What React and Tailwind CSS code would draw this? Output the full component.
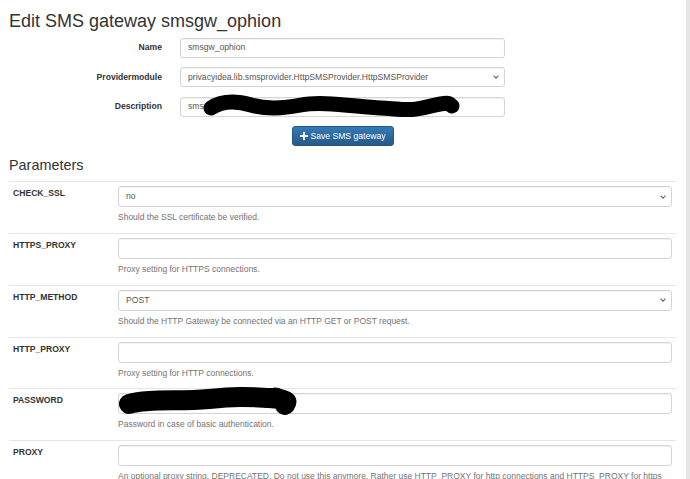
import React from 'react';

const params = [
  { name: 'CHECK_SSL', type: 'select', value: 'no', help: 'Should the SSL certificate be verified.' },
  { name: 'HTTPS_PROXY', type: 'text', value: '', help: 'Proxy setting for HTTPS connections.' },
  { name: 'HTTP_METHOD', type: 'select', value: 'POST', help: 'Should the HTTP Gateway be connected via an HTTP GET or POST request.' },
  { name: 'HTTP_PROXY', type: 'text', value: '', help: 'Proxy setting for HTTP connections.' },
  { name: 'PASSWORD', type: 'text', value: '', help: 'Password in case of basic authentication.', redacted: true },
  {
    name: 'PROXY',
    type: 'text',
    value: '',
    help: 'An optional proxy string. DEPRECATED. Do not use this anymore. Rather use HTTP_PROXY for http connections and HTTPS_PROXY for https connections.',
  },
];

const Chevron = () => (
  <svg className="absolute right-[5px] top-1/2 -translate-y-1/2" width="6" height="4" viewBox="0 0 6 4" fill="none">
    <path d="M0.6 0.6 L3 3.2 L5.4 0.6" stroke="#666" strokeWidth="1.1" />
  </svg>
);

const Field = ({ value, select, className = 'h-[21px]', children }) => (
  <div
    className={
      'relative flex items-center rounded-[3px] border border-[#d4d4d4] bg-white pl-[7px] text-[8.6px] text-[#555] shadow-[inset_0_1px_1px_rgba(0,0,0,0.06)] ' +
      className
    }
  >
    <span>{value}</span>
    {select && <Chevron />}
    {children}
  </div>
);

const DescScribble = () => (
  <svg className="absolute left-0 top-0 overflow-visible" width="1" height="1">
    <path
      d="M30 10 C 42 2, 56 3, 70 7 S 100 11, 120 7 S 170 8, 200 10 S 230 13, 250 8 S 268 6, 271 8"
      stroke="#000"
      strokeWidth="15"
      strokeLinecap="round"
      fill="none"
    />
  </svg>
);

const PassScribble = () => (
  <svg className="absolute left-0 top-0 overflow-visible" width="1" height="1">
    <path
      d="M10 10 C 30 4, 60 8, 90 5 S 130 3, 150 4 S 168 8, 166 11"
      stroke="#000"
      strokeWidth="20"
      strokeLinecap="round"
      fill="none"
    />
    <path d="M150 0 C 156 -4, 162 -2, 164 4" stroke="#000" strokeWidth="9" strokeLinecap="round" fill="none" />
  </svg>
);

const TopRow = ({ label, children }) => (
  <div className="flex items-center">
    <div className="w-[153px] text-right text-[8.6px] font-bold text-[#333]">{label}</div>
    <div className="ml-[18px] w-[325px]">{children}</div>
  </div>
);

export default function App() {
  return (
    <div className="flex h-[479px] w-full overflow-hidden bg-white text-[#333]" style={{ fontFamily: '"Liberation Sans", Arial, Helvetica, sans-serif' }}>
      <div className="flex-1 overflow-hidden pl-[9px]">
        <h2 className="mt-[12px] mb-[6px] text-[18px] leading-[1.1] font-normal">Edit SMS gateway smsgw_ophion</h2>

        <div className="flex flex-col gap-[9.5px]">
          <TopRow label="Name">
            <Field value="smsgw_ophion" className="h-[20px]" />
          </TopRow>
          <TopRow label="Providermodule">
            <Field value="privacyidea.lib.smsprovider.HttpSMSProvider.HttpSMSProvider" select className="h-[20px]" />
          </TopRow>
          <TopRow label="Description">
            <Field value="sms" className="h-[20px]">
              <DescScribble />
            </Field>
          </TopRow>
          <div className="flex">
            <div className="ml-[171px] flex w-[325px] justify-center">
              <button className="flex h-[20px] items-center gap-[3px] rounded-[3px] border border-[#245580] bg-gradient-to-b from-[#337ab7] to-[#265a88] px-[7px] text-[8.6px] text-white">
                <svg width="8" height="8" viewBox="0 0 8 8">
                  <path d="M3 0h2v3h3v2H5v3H3V5H0V3h3z" fill="#fff" />
                </svg>
                Save SMS gateway
              </button>
            </div>
          </div>
        </div>

        <h3 className="mt-[12px] mb-[7px] text-[14.4px] leading-[1.1] font-normal">Parameters</h3>

        <div className="w-[667px]">
          {params.map((p) => (
            <div key={p.name} className="flex border-t border-[#e5e5e5] pt-[4px] pb-[9.8px]">
              <div className="w-[109px] pl-[4px] pt-[1px] text-[8.6px] leading-[12px] font-bold text-[#333]">{p.name}</div>
              <div className="flex-1 pr-[4px]">
                <Field value={p.value} select={p.type === 'select'}>
                  {p.redacted && <PassScribble />}
                </Field>
                <div className="mt-[4px] text-[8.5px] leading-[12px] text-[#737373]">{p.help}</div>
              </div>
            </div>
          ))}
        </div>
      </div>
      <div className="w-[4px] shrink-0 bg-[#e6e6e6]" />
    </div>
  );
}
